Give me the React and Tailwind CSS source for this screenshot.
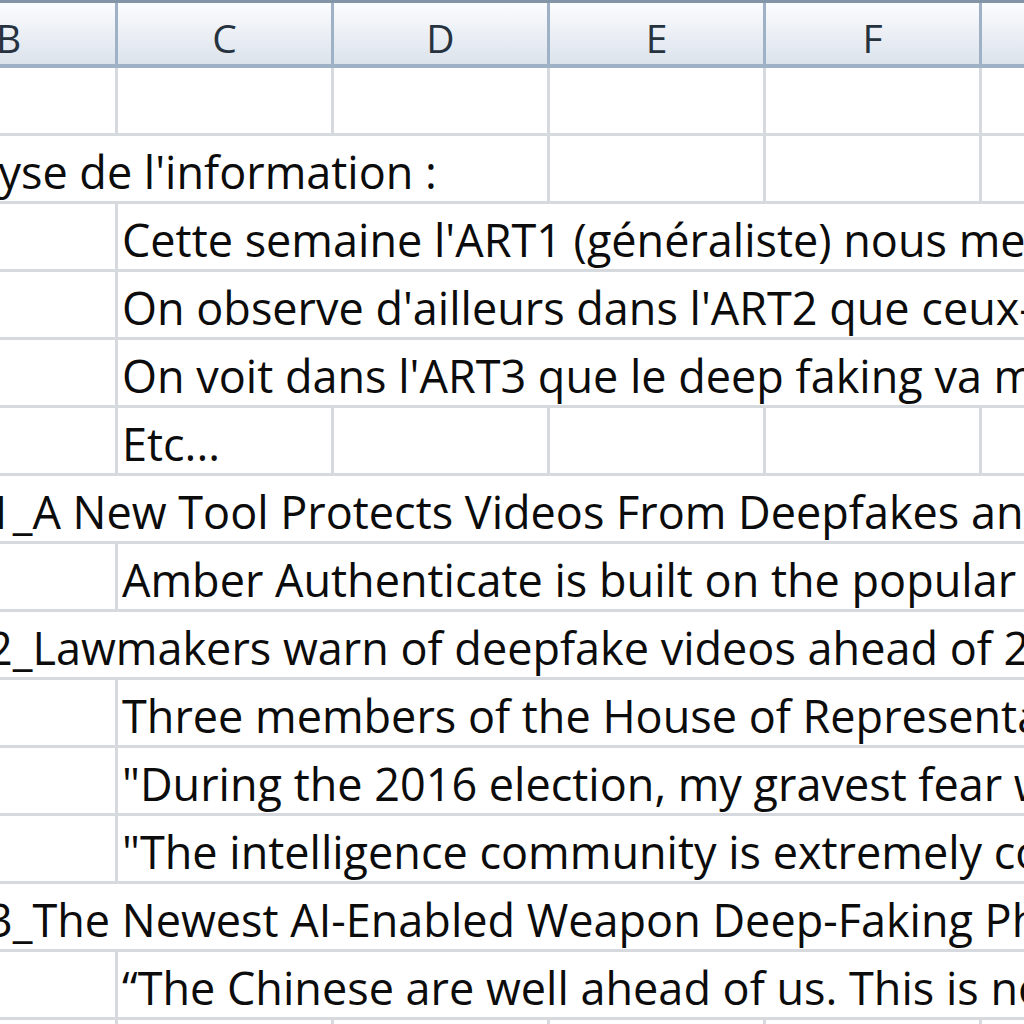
import React from "react";

const COLS = ["B", "C", "D", "E", "F", "G"];

// each row: { start: column index where text goes, span: columns merged, text }
const ROWS = [
  { text: null },
  { start: 0, span: 3, text: "Analyse de l'information :" },
  { start: 1, span: 5, text: "Cette semaine l'ART1 (généraliste) nous met en garde" },
  { start: 1, span: 5, text: "On observe d'ailleurs dans l'ART2 que ceux-ci" },
  { start: 1, span: 5, text: "On voit dans l'ART3 que le deep faking va modifier" },
  { start: 1, span: 1, text: "Etc..." },
  { start: 0, span: 6, text: "ART1_A New Tool Protects Videos From Deepfakes and Tampering" },
  { start: 1, span: 5, text: "Amber Authenticate is built on the popular Ethereum" },
  { start: 0, span: 6, text: "ART2_Lawmakers warn of deepfake videos ahead of 2020 election" },
  { start: 1, span: 5, text: "Three members of the House of Representatives" },
  { start: 1, span: 5, text: "\"During the 2016 election, my gravest fear was" },
  { start: 1, span: 5, text: "\"The intelligence community is extremely concerned" },
  { start: 0, span: 6, text: "ART3_The Newest AI-Enabled Weapon Deep-Faking Photos" },
  { start: 1, span: 5, text: "“The Chinese are well ahead of us. This is not" },
  { text: null },
];

const spanClass = {
  1: "col-span-1",
  2: "col-span-2",
  3: "col-span-3",
  4: "col-span-4",
  5: "col-span-5",
  6: "col-span-6",
};

function Cell({ span = 1, text }) {
  return (
    <div
      className={`${spanClass[span]} h-[68px] border-r-[3px] border-b-[3px] border-[#d6dadf] flex items-end pl-[4px] pb-[7px] whitespace-nowrap overflow-visible`}
    >
      {text && <span className="leading-none text-[45px] font-medium text-[#0c0c0c]">{text}</span>}
    </div>
  );
}

function Row({ row }) {
  const cells = [];
  let i = 0;
  while (i < COLS.length) {
    if (row.text && i === row.start) {
      cells.push(<Cell key={i} span={row.span} text={row.text} />);
      i += row.span;
    } else {
      cells.push(<Cell key={i} />);
      i += 1;
    }
  }
  return <>{cells}</>;
}

export default function App() {
  return (
    <div
      className="w-[1024px] h-[1024px] overflow-hidden bg-white"
      style={{ fontFamily: '"Open Sans", "Noto Sans", sans-serif' }}
    >
      <div className="ml-[-98px] w-[1296px] border-t-[3px] border-[#8494a8]">
        {/* column headers */}
        <div className="grid grid-cols-6">
          {COLS.map((c) => (
            <div
              key={c}
              className="h-[65px] border-r-[3px] border-b-[4px] border-[#9fb1c5] bg-linear-to-b from-[#fbfcfe] to-[#dce3ec] flex items-center justify-center pt-[10px] text-[39px] text-[#27323f]"
            >
              {c}
            </div>
          ))}
        </div>
        {/* sheet rows */}
        <div className="grid grid-cols-6">
          {ROWS.map((r, idx) => (
            <Row key={idx} row={r} />
          ))}
        </div>
      </div>
    </div>
  );
}
